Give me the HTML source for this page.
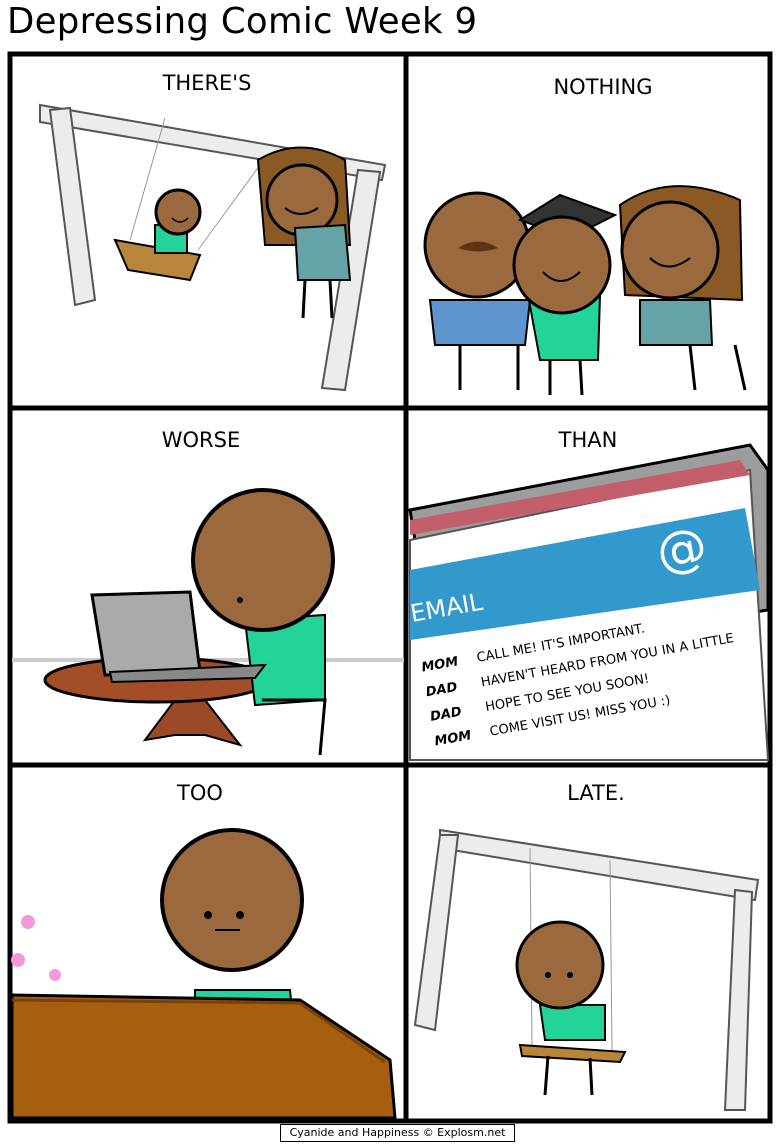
<!DOCTYPE html>
<html><head><meta charset="utf-8"><style>
body{margin:0;background:#fff;width:778px;height:1145px;overflow:hidden;position:relative;font-family:"DejaVu Sans","Liberation Sans",sans-serif}
.t{position:absolute;left:7px;top:1px;font-size:35.5px;color:#000;letter-spacing:0.3px}
.c{position:absolute;left:280px;top:1124px;width:233px;height:16px;border:1px solid #000;font-size:11px;line-height:16px;text-align:center;background:#fff}
svg{position:absolute;left:0;top:0}
</style></head><body>
<div class="t">Depressing Comic Week 9</div>
<svg width="778" height="1145" viewBox="0 0 778 1145" font-family="DejaVu Sans, Liberation Sans, sans-serif">
<rect x="10" y="54" width="760" height="1067" fill="#fff" stroke="#000" stroke-width="5"/>
<line x1="406" y1="54" x2="406" y2="1121" stroke="#000" stroke-width="5"/>
<line x1="10" y1="408" x2="770" y2="408" stroke="#000" stroke-width="5"/>
<line x1="10" y1="765" x2="770" y2="765" stroke="#000" stroke-width="5"/>
<g font-size="21" text-anchor="middle" fill="#000">
<text x="207" y="90">THERE'S</text><text x="603" y="94">NOTHING</text>
<text x="201" y="447">WORSE</text><text x="588" y="447">THAN</text>
<text x="200" y="800">TOO</text><text x="596" y="800">LATE.</text>
</g>
<!-- panel1 swing -->
<g fill="#ececec" stroke="#555" stroke-width="2">
<path d="M40 105 L385 165 L382 180 L40 122 Z"/>
<path d="M50 110 L70 108 L95 300 L75 305 Z"/>
<path d="M358 170 L380 172 L345 390 L322 388 Z"/>
</g>
<line x1="165" y1="118" x2="130" y2="240" stroke="#999"/><line x1="260" y1="165" x2="198" y2="250" stroke="#999"/>
<path d="M115 240 L200 255 L190 280 L128 270 Z" fill="#b9853a" stroke="#000" stroke-width="2"/>
<rect x="155" y="225" width="32" height="28" fill="#22d39a" stroke="#000" stroke-width="2"/>
<circle cx="178" cy="212" r="22" fill="#9a6a3e" stroke="#000" stroke-width="3"/>
<path d="M172 218 Q180 226 188 218" fill="none" stroke="#000" stroke-width="1.5"/>
<path d="M258 160 Q300 135 345 160 L350 245 L265 245 Z" fill="#8b5a24" stroke="#000" stroke-width="2"/>
<circle cx="302" cy="200" r="35" fill="#9a6a3e" stroke="#000" stroke-width="3"/>
<path d="M285 208 Q300 220 318 208" fill="none" stroke="#000" stroke-width="2"/>
<path d="M295 228 L345 225 L350 280 L298 280 Z" fill="#66a3a6" stroke="#000" stroke-width="2"/>
<line x1="305" y1="280" x2="303" y2="318" stroke="#000" stroke-width="3"/><line x1="330" y1="280" x2="332" y2="318" stroke="#000" stroke-width="3"/>
<!-- panel2 -->
<path d="M430 300 L530 300 L525 345 L435 345 Z" fill="#5f95ce" stroke="#000" stroke-width="2"/>
<line x1="460" y1="345" x2="460" y2="390" stroke="#000" stroke-width="3"/><line x1="518" y1="345" x2="518" y2="390" stroke="#000" stroke-width="3"/>
<circle cx="477" cy="245" r="52" fill="#9a6a3e" stroke="#000" stroke-width="3"/>
<path d="M458 248 Q478 235 498 248 Q478 255 458 248Z" fill="#5a3510"/>
<path d="M520 220 L560 195 L615 215 L570 238 Z" fill="#333" stroke="#000" stroke-width="2"/>
<path d="M640 300 L710 300 L712 345 L640 345 Z" fill="#66a3a6" stroke="#000" stroke-width="2"/>
<line x1="690" y1="345" x2="695" y2="390" stroke="#000" stroke-width="3"/><line x1="735" y1="345" x2="745" y2="390" stroke="#000" stroke-width="3"/>
<path d="M620 205 Q670 170 740 200 L742 300 L625 295 Z" fill="#8b5a24" stroke="#000" stroke-width="2"/>
<circle cx="670" cy="250" r="48" fill="#9a6a3e" stroke="#000" stroke-width="3"/>
<path d="M650 258 Q668 275 690 258" fill="none" stroke="#000" stroke-width="2"/>
<path d="M528 295 L600 295 L598 360 L540 360 Z" fill="#22d39a" stroke="#000" stroke-width="2"/>
<line x1="550" y1="360" x2="550" y2="395" stroke="#000" stroke-width="3"/><line x1="580" y1="360" x2="582" y2="395" stroke="#000" stroke-width="3"/>
<circle cx="562" cy="265" r="48" fill="#9a6a3e" stroke="#000" stroke-width="3"/>
<path d="M543 272 Q560 290 580 272" fill="none" stroke="#000" stroke-width="2"/>
<!-- panel3 -->
<line x1="12" y1="660" x2="404" y2="660" stroke="#ccc" stroke-width="4"/>
<path d="M145 740 L175 700 L205 700 L240 745 L205 735 L175 735 Z" fill="#9b4a25" stroke="#000" stroke-width="2"/>
<ellipse cx="157" cy="680" rx="112" ry="22" fill="#a34e26" stroke="#000" stroke-width="3"/>
<path d="M245 620 L325 615 L325 700 L255 705 Z" fill="#22d39a" stroke="#000" stroke-width="2"/>
<path d="M262 700 L325 700 L320 755" fill="none" stroke="#000" stroke-width="3"/>
<circle cx="263" cy="560" r="70" fill="#9a6a3e" stroke="#000" stroke-width="4"/>
<circle cx="240" cy="600" r="3" fill="#000"/>
<path d="M92 595 L190 592 L200 672 L105 675 Z" fill="#aaa" stroke="#000" stroke-width="3"/>
<path d="M110 672 L265 665 L255 678 L112 682 Z" fill="#888" stroke="#000" stroke-width="2"/>
<!-- panel4 laptop -->
<path d="M410 510 L750 445 L768 470 L768 610 L435 660 Z" fill="#9d9d9d" stroke="#000" stroke-width="3"/>
<path d="M410 540 L750 470 L768 760 L410 760 Z" fill="#fff" stroke="#555" stroke-width="2"/>
<path d="M410 520 L740 460 L750 475 L410 535 Z" fill="#c25f6a"/>
<path d="M410 570 L745 508 L760 590 L410 640 Z" fill="#3399cc"/>
<text x="412" y="622" font-size="24" fill="#fff" transform="rotate(-10 412 622)">EMAIL</text>
<text x="660" y="570" font-size="50" fill="#fff" transform="rotate(-10 660 570)">@</text>
<g font-size="13" fill="#000" transform="rotate(-10 420 670)">
<text x="422" y="672" font-weight="bold" font-style="italic">MOM</text><text x="478" y="672">CALL ME! IT'S IMPORTANT.</text>
<text x="422" y="697" font-weight="bold" font-style="italic">DAD</text><text x="478" y="697">HAVEN'T HEARD FROM YOU IN A LITTLE</text>
<text x="422" y="722" font-weight="bold" font-style="italic">DAD</text><text x="478" y="722">HOPE TO SEE YOU SOON!</text>
<text x="422" y="747" font-weight="bold" font-style="italic">MOM</text><text x="478" y="747">COME VISIT US! MISS YOU :)</text>
</g>
<!-- panel5 -->
<path d="M195 990 L290 990 L292 1010 L195 1010 Z" fill="#22d39a" stroke="#000" stroke-width="2"/>
<circle cx="232" cy="900" r="70" fill="#9a6a3e" stroke="#000" stroke-width="4"/>
<circle cx="208" cy="915" r="4" fill="#000"/><circle cx="240" cy="915" r="4" fill="#000"/>
<line x1="215" y1="930" x2="240" y2="930" stroke="#000" stroke-width="2"/>
<path d="M12 995 L300 1000 L390 1060 L395 1118 L12 1118 Z" fill="#a85e0f" stroke="#000" stroke-width="3"/>
<path d="M12 1000 L300 1003 L385 1062" fill="none" stroke="#7a420a" stroke-width="3"/>
<circle cx="28" cy="922" r="7" fill="#f29ad8"/><circle cx="18" cy="960" r="7" fill="#f29ad8"/><circle cx="55" cy="975" r="6" fill="#f29ad8"/>
<!-- panel6 -->
<g fill="#ececec" stroke="#555" stroke-width="2">
<path d="M440 830 L758 880 L755 900 L440 848 Z"/>
<path d="M440 835 L458 835 L435 1030 L415 1025 Z"/>
<path d="M735 890 L752 892 L745 1110 L725 1110 Z"/>
</g>
<line x1="530" y1="848" x2="532" y2="1045" stroke="#999"/><line x1="610" y1="860" x2="612" y2="1050" stroke="#999"/>
<path d="M540 1005 L605 1005 L605 1040 L545 1040 Z" fill="#22d39a" stroke="#000" stroke-width="2"/>
<path d="M520 1045 L625 1052 L620 1062 L522 1056 Z" fill="#b9853a" stroke="#000" stroke-width="2"/>
<line x1="548" y1="1056" x2="545" y2="1095" stroke="#000" stroke-width="3"/><line x1="590" y1="1058" x2="592" y2="1095" stroke="#000" stroke-width="3"/>
<circle cx="560" cy="965" r="43" fill="#9a6a3e" stroke="#000" stroke-width="3"/>
<circle cx="548" cy="975" r="3" fill="#000"/><circle cx="570" cy="975" r="3" fill="#000"/>
</svg>
<div class="c">Cyanide and Happiness © Explosm.net</div>
</body></html>
